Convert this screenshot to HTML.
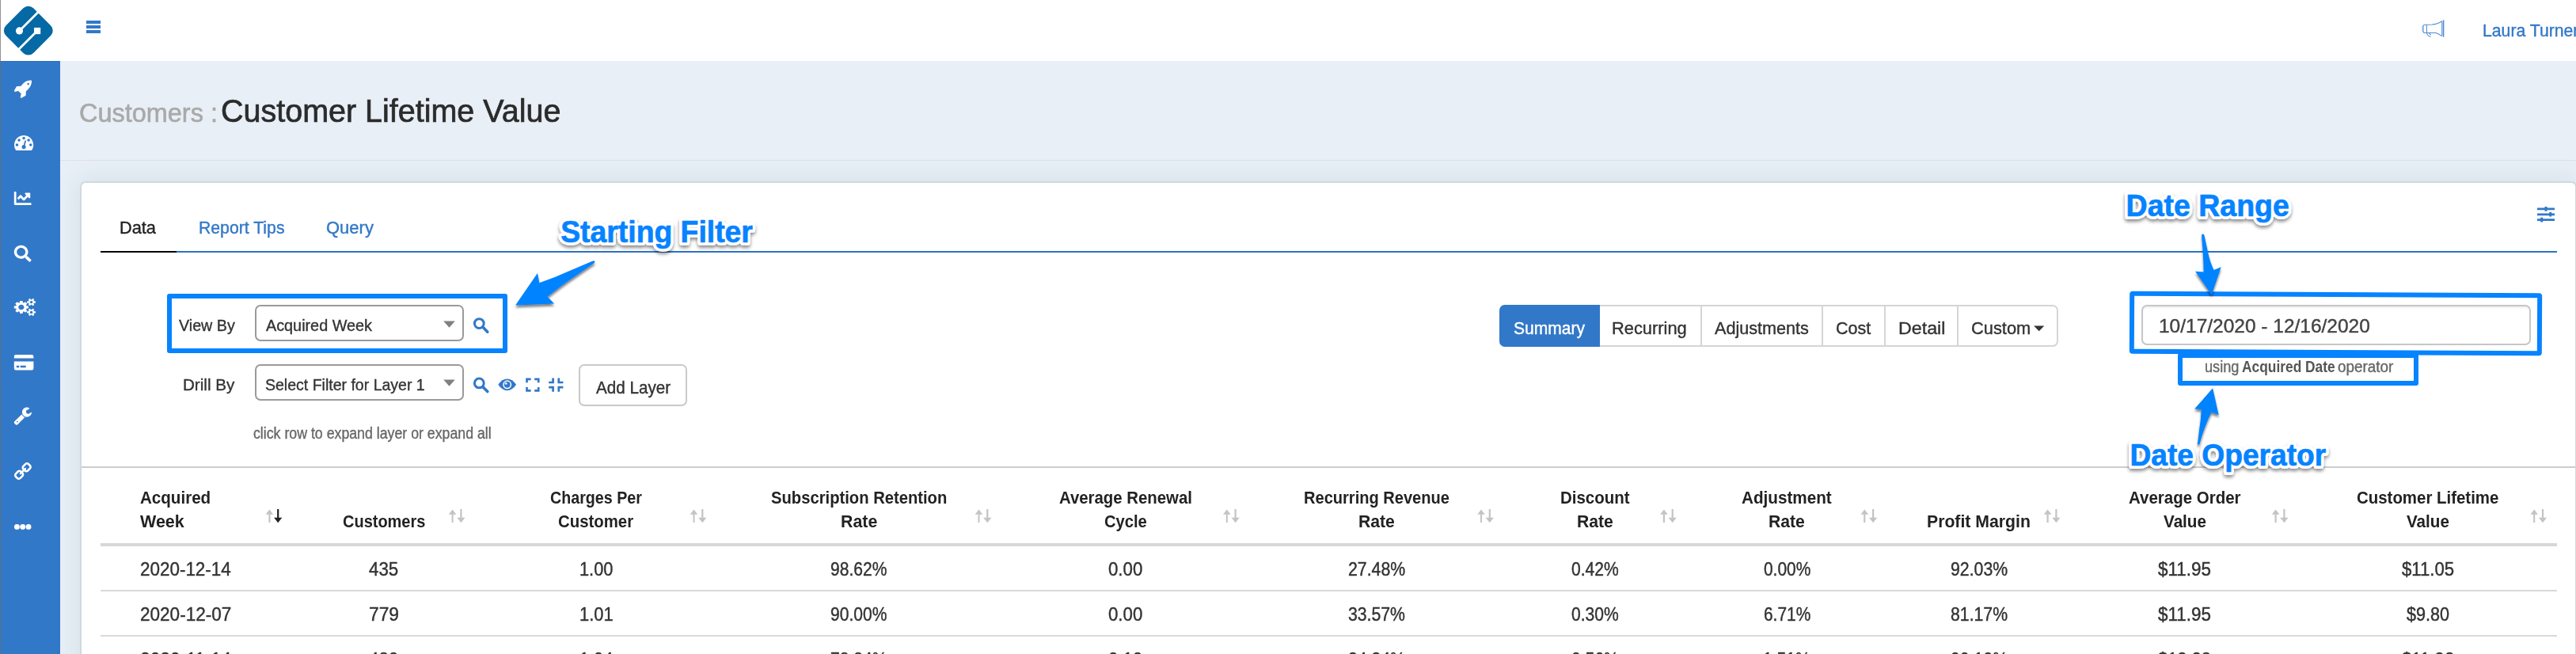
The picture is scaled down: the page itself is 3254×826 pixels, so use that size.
<!DOCTYPE html>
<html lang="en"><head><meta charset="utf-8"><title>Customer Lifetime Value</title>
<style>
html,body{margin:0;padding:0}
body{width:3254px;height:826px;overflow:hidden;position:relative;background:#e8eff6;font-family:"Liberation Sans",sans-serif}
.a{position:absolute;box-sizing:border-box}
.t{position:absolute;white-space:pre;line-height:1;transform-origin:0 0;-webkit-text-stroke:0.018em currentColor}
.ann{font-weight:700;paint-order:stroke fill}
</style></head><body>
<div class="a" style="left:0.00px;top:0.00px;width:3254.00px;height:77.00px;background:#fff"></div>
<div class="a" style="left:76.00px;top:77.00px;width:3178.00px;height:125.40px;background:#e8eff6"></div>
<div class="a" style="left:76.00px;top:202.00px;width:3178.00px;height:1.20px;background:#dde1e4"></div>
<div class="a" style="left:0.00px;top:77.00px;width:76.00px;height:749.00px;background:#3278c8"></div>
<div class="a" style="left:0.00px;top:0.00px;width:1.00px;height:826.00px;background:rgba(110,110,110,0.75)"></div>
<div class="a" style="left:1.00px;top:77.00px;width:75.00px;height:1.00px;background:#2c70c4"></div>
<svg class="a" style="left:0;top:0" width="80" height="77" viewBox="0 0 80 77">
<g transform="translate(35.8 38.65) rotate(45)"><rect x="-24.5" y="-24.5" width="49" height="49" rx="9" fill="#0469a4"/></g>
<g stroke="#fff" stroke-width="2.8" fill="none"><path d="M24.5 38.9 L50 13.4"/><path d="M47 39 L21 65"/></g>
<circle cx="24.5" cy="38.9" r="4.6" fill="#fff"/><rect x="43" y="34.9" width="8.2" height="8.2" fill="#fff"/>
</svg>
<div class="a" style="left:109.00px;top:26.40px;width:18.30px;height:3.60px;background:#3278c8"></div>
<div class="a" style="left:109.00px;top:32.40px;width:18.30px;height:3.60px;background:#3278c8"></div>
<div class="a" style="left:109.00px;top:38.40px;width:18.30px;height:3.60px;background:#3278c8"></div>
<svg class="a" style="left:3050px;top:20px" width="50" height="36" viewBox="3050 20 50 36">
<rect x="3059.1" y="32.5" width="1.7" height="7.3" fill="#c4d7f0"/><rect x="3084.6" y="26.9" width="1.6" height="18.6" fill="#c4d7f0"/>
<g fill="none" stroke="#4f8ad3" stroke-width="1.05">
<path d="M3065.4 31.2 H3063 Q3061 31.2 3061 33.2 V39.5 Q3061 41.5 3063 41.5 H3065.4"/>
<path d="M3065.4 31.2 V41.5"/>
<path d="M3065.4 31.2 L3072 31.1 Q3079 30.6 3084.6 26.7"/>
<path d="M3065.4 41.5 L3077 41.5 Q3080 42.5 3084.6 45.6"/>
<path d="M3084.4 26.7 V45.6" stroke-width="0.8"/>
<path d="M3086.6 25.3 V46.7" stroke-width="1.5"/>
<path d="M3065.6 41.8 Q3066 45.5 3070.6 46.6 M3068.4 41.8 Q3069.5 43.5 3070.8 44.2"/>
</g></svg>
<span id="t0" class="t " style="left:3135.86px;top:28.00px;font-size:22.40px;color:#3278c8;transform:scaleX(0.9470);">Laura Turner</span>
<svg class="a" style="left:0;top:0" width="3254" height="826"><path fill="#fff" transform="translate(17.80 101.60) scale(0.01360 -0.01360) translate(-31.9 -1408.0)" d="M1440 1088C1440 1035 1397 992 1344 992C1291 992 1248 1035 1248 1088C1248 1141 1291 1184 1344 1184C1397 1184 1440 1141 1440 1088ZM1664 1376C1664 1394 1648 1408 1630 1408C1282 1408 1091 1328 841 1079C784 1021 725 955 665 884L286 864C276 863 266 857 260 848L36 464C29 452 31 436 41 425L105 361C111 355 120 352 128 352C131 352 134 352 137 353L413 438L694 157L609 -119C606 -130 609 -142 617 -151L681 -215C688 -221 696 -224 704 -224C710 -224 715 -223 720 -220L1104 4C1113 10 1119 20 1120 30L1140 409C1211 469 1277 528 1335 585C1572 823 1664 1044 1664 1376Z"/></svg>
<svg class="a" style="left:0;top:0" width="3254" height="826"><path fill="#fff" transform="translate(18.01 171.00) scale(0.01349 -0.01349) translate(0.0 -1280.0)" d="M384 384C384 313 327 256 256 256C185 256 128 313 128 384C128 455 185 512 256 512C327 512 384 455 384 384ZM576 832C576 761 519 704 448 704C377 704 320 761 320 832C320 903 377 960 448 960C519 960 576 903 576 832ZM1004 351C1069 306 1103 224 1082 143C1055 41 950 -21 847 6C745 33 683 138 710 241C732 322 801 377 880 383L981 765C990 799 1025 820 1059 811C1093 802 1113 767 1105 733ZM1664 384C1664 313 1607 256 1536 256C1465 256 1408 313 1408 384C1408 455 1465 512 1536 512C1607 512 1664 455 1664 384ZM1024 1024C1024 953 967 896 896 896C825 896 768 953 768 1024C768 1095 825 1152 896 1152C967 1152 1024 1095 1024 1024ZM1472 832C1472 761 1415 704 1344 704C1273 704 1216 761 1216 832C1216 903 1273 960 1344 960C1415 960 1472 903 1472 832ZM1792 384C1792 878 1390 1280 896 1280C402 1280 0 878 0 384C0 212 49 45 141 -99C153 -117 173 -128 195 -128H1597C1619 -128 1639 -117 1651 -99C1743 46 1792 212 1792 384Z"/></svg>
<svg class="a" style="left:0;top:0" width="3254" height="826"><path fill="#fff" transform="translate(17.80 242.00) scale(0.04258 0.04427) translate(0.0 -64.0)" d="M496 384H64V80c0-8.84-7.16-16-16-16H16C7.16 64 0 71.16 0 80v336c0 17.67 14.33 32 32 32h464c8.84 0 16-7.16 16-16v-32c0-8.84-7.16-16-16-16zM464 96H345.94c-21.38 0-32.09 25.85-16.97 40.97l32.4 32.4L288 242.75l-73.37-73.37c-12.5-12.5-32.76-12.5-45.25 0l-68.69 68.69c-6.25 6.25-6.25 16.38 0 22.63l22.62 22.62c6.25 6.25 16.38 6.25 22.63 0L192 237.25l73.37 73.37c12.5 12.5 32.76 12.5 45.25 0l96-96 32.4 32.4c15.12 15.12 40.97 4.41 40.97-16.97V112c.01-8.84-7.15-16-15.99-16z"/></svg>
<svg class="a" style="left:0;top:0" width="3254" height="826"><path fill="#fff" transform="translate(17.80 309.80) scale(0.04258 0.04102) translate(0.0 0.0)" d="M505 442.7L405.3 343c-4.5-4.5-10.6-7-17-7H372c27.6-35.3 44-79.7 44-128C416 93.1 322.9 0 208 0S0 93.1 0 208s93.1 208 208 208c48.3 0 92.7-16.4 128-44v16.3c0 6.4 2.5 12.5 7 17l99.700 99.7c9.4 9.4 24.6 9.4 33.9 0l28.300-28.300c9.4-9.4 9.4-24.6.1-34zM208 336c-70.7 0-128-57.2-128-128 0-70.7 57.2-128 128-128 70.7 0 128 57.2 128 128 0 70.7-57.2 128-128 128z"/></svg>
<svg class="a" style="left:0;top:0" width="3254" height="826"><path fill="#fff" transform="translate(17.80 377.00) scale(0.01417 -0.01249) translate(0.0 -1520.0)" d="M896 640C896 499 781 384 640 384C499 384 384 499 384 640C384 781 499 896 640 896C781 896 896 781 896 640ZM1664 128C1664 58 1607 0 1536 0C1466 0 1408 57 1408 128C1408 198 1466 256 1536 256C1606 256 1664 198 1664 128ZM1664 1152C1664 1082 1607 1024 1536 1024C1466 1024 1408 1081 1408 1152C1408 1222 1466 1280 1536 1280C1606 1280 1664 1222 1664 1152ZM1280 731C1280 745 1270 758 1256 761L1104 784C1095 812 1083 839 1070 866C1098 905 1128 941 1157 980C1161 986 1164 992 1164 999C1164 1027 1046 1135 1020 1159C1014 1164 1007 1167 999 1167C992 1167 985 1165 979 1160L861 1071C837 1083 812 1094 786 1102L763 1255C761 1269 747 1280 733 1280H547C533 1280 521 1270 517 1256C504 1207 499 1152 494 1102C467 1093 442 1083 417 1070L302 1160C296 1164 289 1167 281 1167C252 1167 140 1046 120 1019C115 1013 113 1006 113 999C113 992 116 985 120 979C152 941 182 904 210 864C197 839 186 814 178 788L23 764C10 762 0 747 0 734V549C0 535 10 522 24 520L176 496C185 468 197 441 211 414C182 375 152 338 123 300C119 294 116 288 116 281C116 252 234 145 260 121C266 116 273 113 281 113C288 113 296 115 301 120L419 209C443 197 468 186 494 178L517 25C519 11 533 0 547 0H733C747 0 759 10 763 24C776 73 781 128 786 179C813 187 838 197 863 210L978 120C984 116 991 113 999 113C1028 113 1140 235 1160 262C1165 267 1167 274 1167 281C1167 289 1164 295 1160 301C1128 339 1098 376 1070 416C1083 441 1094 466 1102 492L1257 516C1270 518 1280 533 1280 546ZM1920 198C1920 213 1791 227 1771 229C1763 247 1753 265 1741 281C1750 301 1792 401 1792 419C1792 421 1791 424 1788 426C1776 433 1669 496 1664 496L1658 494C1624 460 1594 421 1566 382C1556 383 1546 384 1536 384C1526 384 1516 383 1506 382C1496 397 1421 496 1408 496C1403 496 1296 432 1284 426C1281 424 1280 421 1280 419C1280 402 1322 301 1331 281C1319 265 1309 247 1301 229C1281 227 1152 213 1152 198V58C1152 43 1281 29 1301 27C1309 8 1319 -9 1331 -25C1322 -45 1280 -146 1280 -163C1280 -165 1281 -168 1284 -170C1296 -177 1403 -241 1408 -241C1421 -241 1496 -141 1506 -126C1516 -127 1526 -128 1536 -128C1546 -128 1556 -127 1566 -126C1576 -141 1651 -241 1664 -241C1669 -241 1776 -177 1788 -170C1791 -168 1792 -166 1792 -163C1792 -145 1750 -45 1741 -25C1753 -9 1763 8 1771 27C1791 29 1920 43 1920 58ZM1920 1222C1920 1237 1791 1251 1771 1253C1763 1271 1753 1289 1741 1305C1750 1325 1792 1425 1792 1443C1792 1445 1791 1448 1788 1450C1776 1457 1669 1520 1664 1520L1658 1518C1624 1484 1594 1445 1566 1406C1556 1407 1546 1408 1536 1408C1526 1408 1516 1407 1506 1406C1496 1421 1421 1520 1408 1520C1403 1520 1296 1456 1284 1450C1281 1448 1280 1445 1280 1443C1280 1426 1322 1325 1331 1305C1319 1289 1309 1271 1301 1253C1281 1251 1152 1237 1152 1222V1082C1152 1067 1281 1053 1301 1051C1309 1032 1319 1015 1331 999C1322 979 1280 878 1280 861C1280 859 1281 856 1284 854C1296 847 1403 783 1408 783C1421 783 1496 883 1506 898C1516 897 1526 896 1536 896C1546 896 1556 897 1566 898C1576 883 1651 783 1664 783C1669 783 1776 847 1788 854C1791 856 1792 858 1792 861C1792 879 1750 979 1741 999C1753 1015 1763 1032 1771 1051C1791 1053 1920 1067 1920 1082Z"/></svg>
<svg class="a" style="left:0;top:0" width="100" height="826"><path fill="#fff" fill-rule="evenodd" d="M20 448.1 H40.2 Q42.4 448.1 42.4 450.3 V452.5 H17.8 V450.3 Q17.8 448.1 20 448.1Z M17.8 456.4 H42.4 V465.2 Q42.4 467.4 40.2 467.4 H20 Q17.8 467.4 17.8 465.2Z M20.8 461.7 H24.2 V464.2 H20.8Z M25.7 461.7 H32.7 V464.2 H25.7Z"/><circle cx="21.4" cy="665.4" r="3.45" fill="#fff"/><circle cx="28.7" cy="665.4" r="3.45" fill="#fff"/><circle cx="36" cy="665.4" r="3.45" fill="#fff"/></svg>
<svg class="a" style="left:0;top:0" width="3254" height="826"><path fill="#fff" transform="translate(17.80 514.54) scale(0.01353 -0.01353) translate(-21.0 -1408.0)" d="M384 64C384 29 355 0 320 0C285 0 256 29 256 64C256 99 285 128 320 128C355 128 384 99 384 64ZM1028 484C897 536 792 641 740 772L59 91C35 67 21 34 21 0C21 -34 35 -67 59 -90L165 -198C189 -221 222 -235 256 -235C290 -235 323 -221 346 -198L1028 484ZM1662 919C1662 939 1650 954 1630 954C1610 954 1378 808 1345 789L1152 896V1120L1445 1289C1454 1295 1461 1306 1461 1317C1461 1329 1455 1338 1445 1345C1384 1386 1289 1408 1216 1408C969 1408 768 1207 768 960C768 713 969 512 1216 512C1405 512 1576 635 1639 813C1650 845 1662 886 1662 919Z"/></svg>
<svg class="a" style="left:0;top:0" width="3254" height="826"><path fill="#fff" transform="translate(39.90 584.00) scale(-0.01348 -0.01348) translate(-16.0 -1520.0)" d="M1456 320C1456 295 1446 271 1428 253L1281 107C1263 90 1238 81 1213 81C1188 81 1163 90 1145 108L939 315C921 333 911 358 911 383C911 413 923 436 944 456C977 423 1005 384 1056 384C1109 384 1152 427 1152 480C1152 531 1113 559 1080 592C1100 613 1123 624 1152 624C1177 624 1202 614 1220 596L1428 388C1446 370 1456 346 1456 320ZM753 1025C753 995 741 972 720 952C687 985 659 1024 608 1024C555 1024 512 981 512 928C512 877 551 849 584 816C564 795 541 785 512 785C487 785 462 794 444 812L236 1020C218 1038 208 1062 208 1088C208 1113 218 1137 236 1155L383 1301C401 1318 426 1328 451 1328C476 1328 501 1318 519 1300L725 1093C743 1075 753 1050 753 1025ZM1648 320C1648 397 1619 469 1564 524L1356 732C1302 786 1228 816 1152 816C1073 816 999 784 944 728L856 816C912 871 944 946 944 1025C944 1101 915 1174 861 1228L655 1435C601 1490 528 1520 451 1520C375 1520 302 1491 248 1437L101 1291C47 1238 16 1164 16 1088C16 1011 45 939 100 884L308 676C362 622 436 592 512 592C591 592 665 624 720 680L808 592C752 537 720 462 720 383C720 307 749 234 803 180L1009 -27C1063 -82 1136 -112 1213 -112C1289 -112 1362 -83 1416 -29L1563 117C1617 170 1648 244 1648 320Z"/></svg>
<span id="t1" class="t " style="left:99.75px;top:125.00px;font-size:34.00px;color:#a9a9a9;transform:scaleX(0.9544);">Customers :</span>
<span id="t2" class="t " style="left:278.69px;top:121.00px;font-size:40.30px;color:#2b2b2b;transform:scaleX(0.9797);">Customer Lifetime Value</span>
<div class="a" style="left:101.00px;top:228.60px;width:3153.60px;height:700.00px;background:#fff;border:2px solid #cfdadd;border-radius:7px;box-shadow:0 0 30px rgba(90,135,135,0.15)"></div>
<span id="t3" class="t " style="left:151.41px;top:278.00px;font-size:21.30px;color:#222;transform:scaleX(1.0219);">Data</span>
<span id="t4" class="t " style="left:250.76px;top:278.00px;font-size:21.30px;color:#3278c8;transform:scaleX(0.9963);">Report Tips</span>
<span id="t5" class="t " style="left:412.16px;top:278.00px;font-size:21.30px;color:#3278c8;transform:scaleX(1.0325);">Query</span>
<div class="a" style="left:222.50px;top:317.00px;width:3007.50px;height:2.00px;background:#2d72c5"></div>
<div class="a" style="left:127.00px;top:317.00px;width:95.50px;height:2.00px;background:#000"></div>
<svg class="a" style="left:0;top:0" width="3254" height="826"><g stroke="#3278c8" fill="none"><path stroke-width="2.7" d="M3205 263.9 H3227 M3205 270.8 H3227 M3205 277.6 H3227"/><path stroke-width="3" d="M3216 261.1 V266.7 M3221.7 268 V273.6 M3210.7 274.8 V280.4"/></g></svg>
<div class="a" style="left:322.00px;top:385.00px;width:263.80px;height:45.60px;background:#fff;border:2px solid #9a9a9a;border-radius:7px"></div>
<div class="a" style="left:322.00px;top:460.20px;width:263.80px;height:45.50px;background:#fff;border:2px solid #9a9a9a;border-radius:7px"></div>
<span id="t6" class="t " style="left:225.61px;top:401.00px;font-size:20.80px;color:#333;transform:scaleX(0.9462);">View By</span>
<span id="t7" class="t " style="left:231.11px;top:476.00px;font-size:20.80px;color:#333;transform:scaleX(0.9904);">Drill By</span>
<span id="t8" class="t " style="left:336.16px;top:401.00px;font-size:20.80px;color:#333;transform:scaleX(0.9520);">Acquired Week</span>
<span id="t9" class="t " style="left:335.31px;top:476.00px;font-size:20.80px;color:#333;transform:scaleX(0.9383);">Select Filter for Layer 1</span>
<svg class="a" style="left:0;top:0" width="3254" height="826"><path fill="#808080" d="M560.2 405.4 H574.8 L567.5 413.8Z M560.2 479.4 H574.8 L567.5 487.8Z"/><g fill="none" stroke="#3278c8" stroke-width="3"><circle cx="605.3" cy="408.6" r="5.9"/><circle cx="605.3" cy="483.9" r="5.9"/></g><g stroke="#3278c8" stroke-width="3.6" stroke-linecap="round"><path d="M610.3 413.6 L615.8 419.2 M610.3 488.9 L615.8 494.5"/></g><g fill="none" stroke="#3278c8" stroke-width="2.7"><path d="M665.5 483.2 V478.8 H670.6 M675.2 478.8 H680.2 V483.2 M680.2 489 V493.4 H675.2 M670.6 493.4 H665.5 V489"/><path d="M693.2 483 H698.6 V477.4 M705.8 477.4 V483 H711.4 M711.4 489.2 H705.8 V494.8 M698.6 494.8 V489.2 H693.2"/></g></svg>
<svg class="a" style="left:0;top:0" width="3254" height="826"><path fill="#3278c8" d="M629.3 485.8 Q634.2 478.4 640.7 478.4 Q647.2 478.4 652.1 485.8 Q647.2 493.2 640.7 493.2 Q634.2 493.2 629.3 485.8Z"/><circle cx="640.7" cy="485.8" r="4.7" fill="none" stroke="#fff" stroke-width="1.5"/><circle cx="639.2" cy="484.3" r="1.5" fill="#dce9f8"/></svg>
<div class="a" style="left:731.20px;top:460.30px;width:137.00px;height:53.00px;background:#fff;border:2px solid #c9c9c9;border-radius:7px"></div>
<span id="t10" class="t " style="left:752.96px;top:479.00px;font-size:22.30px;color:#333;transform:scaleX(0.9255);">Add Layer</span>
<span id="t11" class="t " style="left:320.25px;top:538.00px;font-size:19.30px;color:#666;transform:scaleX(0.9200);">click row to expand layer or expand all</span>
<div class="a" style="left:211.00px;top:370.80px;width:430.30px;height:75.60px;border:6px solid #0683ff;border-radius:3px"></div>
<div class="a" style="left:1894.00px;top:385.00px;width:706.30px;height:53.00px;background:#fff;border:2px solid #d5d5d5;border-radius:7px"></div>
<div class="a" style="left:1894.00px;top:385.00px;width:127.00px;height:53.00px;background:#3278c8;border-radius:7px 0 0 7px"></div>
<div class="a" style="left:2148.00px;top:385.00px;width:2.00px;height:53.00px;background:#d5d5d5"></div>
<div class="a" style="left:2301.40px;top:385.00px;width:2.00px;height:53.00px;background:#d5d5d5"></div>
<div class="a" style="left:2380.10px;top:385.00px;width:2.00px;height:53.00px;background:#d5d5d5"></div>
<div class="a" style="left:2472.20px;top:385.00px;width:2.00px;height:53.00px;background:#d5d5d5"></div>
<span id="t12" class="t " style="left:1912.34px;top:404.00px;font-size:22.30px;color:#fff;transform:scaleX(0.9433);">Summary</span>
<span id="t13" class="t " style="left:2036.21px;top:404.00px;font-size:22.30px;color:#333;transform:scaleX(0.9798);">Recurring</span>
<span id="t14" class="t " style="left:2165.76px;top:404.00px;font-size:22.30px;color:#333;transform:scaleX(0.9693);">Adjustments</span>
<span id="t15" class="t " style="left:2319.11px;top:404.00px;font-size:22.30px;color:#333;transform:scaleX(0.9649);">Cost</span>
<span id="t16" class="t " style="left:2397.69px;top:404.00px;font-size:22.30px;color:#333;transform:scaleX(1.0429);">Detail</span>
<span id="t17" class="t " style="left:2490.19px;top:404.00px;font-size:22.30px;color:#333;transform:scaleX(0.9794);">Custom</span>
<svg class="a" style="left:0;top:0" width="3254" height="826"><path fill="#333" d="M2569.1 411.5 H2582.3 L2575.7 418.2Z"/></svg>
<div class="a" style="left:2705.30px;top:385.30px;width:491.70px;height:50.80px;background:#fff;border:2px solid #c6c6c6;border-radius:7px;box-shadow:inset 0 2px 2px rgba(0,0,0,0.06)"></div>
<span id="t18" class="t " style="left:2726.53px;top:401.00px;font-size:23.40px;color:#444;transform:scaleX(1.0467);">10/17/2020 - 12/16/2020</span>
<span id="t19" class="t " style="left:2785.32px;top:454.00px;font-size:19.30px;color:#666;transform:scaleX(0.9424);">using</span>
<span id="t20" class="t " style="left:2831.57px;top:454.00px;font-size:19.30px;color:#555;font-weight:700;-webkit-text-stroke:0;transform:scaleX(0.9006);">Acquired Date</span>
<span id="t21" class="t " style="left:2952.81px;top:454.00px;font-size:19.30px;color:#666;transform:scaleX(0.9788);">operator</span>
<div class="a" style="left:2751.30px;top:446.10px;width:303.30px;height:40.70px;border:6px solid #0683ff;border-radius:3px"></div>
<div class="a" style="left:2689.80px;top:368.90px;width:521.20px;height:78.80px;background:transparent;border:6px solid #0683ff;border-radius:4px;transform:rotate(0.3deg)"></div>
<div class="a" style="left:103.00px;top:589.00px;width:3150.00px;height:2.00px;background:#cdcdcd"></div>
<div class="a" style="left:127.00px;top:686.00px;width:3103.00px;height:4.00px;background:#d7d7d7"></div>
<div class="a" style="left:127.00px;top:745.00px;width:3103.00px;height:2.00px;background:#d9d9d9"></div>
<div class="a" style="left:127.00px;top:802.00px;width:3103.00px;height:2.00px;background:#d9d9d9"></div>
<span id="t22" class="t " style="left:176.59px;top:617.00px;font-size:22.90px;color:#222;font-weight:700;-webkit-text-stroke:0;transform:scaleX(0.8987);">Acquired</span>
<span id="t23" class="t " style="left:177.08px;top:647.00px;font-size:22.90px;color:#222;font-weight:700;-webkit-text-stroke:0;transform:scaleX(0.9379);">Week</span>
<span id="t24" class="t " style="left:432.78px;top:647.00px;font-size:22.90px;color:#222;font-weight:700;-webkit-text-stroke:0;transform:scaleX(0.8726);">Customers</span>
<span id="t25" class="t " style="left:694.59px;top:617.00px;font-size:22.90px;color:#222;font-weight:700;-webkit-text-stroke:0;transform:scaleX(0.8594);">Charges Per</span>
<span id="t26" class="t " style="left:704.76px;top:647.00px;font-size:22.90px;color:#222;font-weight:700;-webkit-text-stroke:0;transform:scaleX(0.8905);">Customer</span>
<span id="t27" class="t " style="left:974.02px;top:617.00px;font-size:22.90px;color:#222;font-weight:700;-webkit-text-stroke:0;transform:scaleX(0.8829);">Subscription Retention</span>
<span id="t28" class="t " style="left:1061.87px;top:647.00px;font-size:22.90px;color:#222;font-weight:700;-webkit-text-stroke:0;transform:scaleX(0.9321);">Rate</span>
<span id="t29" class="t " style="left:1337.89px;top:617.00px;font-size:22.90px;color:#222;font-weight:700;-webkit-text-stroke:0;transform:scaleX(0.8899);">Average Renewal</span>
<span id="t30" class="t " style="left:1394.57px;top:647.00px;font-size:22.90px;color:#222;font-weight:700;-webkit-text-stroke:0;transform:scaleX(0.8809);">Cycle</span>
<span id="t31" class="t " style="left:1646.66px;top:617.00px;font-size:22.90px;color:#222;font-weight:700;-webkit-text-stroke:0;transform:scaleX(0.8762);">Recurring Revenue</span>
<span id="t32" class="t " style="left:1715.89px;top:647.00px;font-size:22.90px;color:#222;font-weight:700;-webkit-text-stroke:0;transform:scaleX(0.9237);">Rate</span>
<span id="t33" class="t " style="left:1971.13px;top:617.00px;font-size:22.90px;color:#222;font-weight:700;-webkit-text-stroke:0;transform:scaleX(0.8936);">Discount</span>
<span id="t34" class="t " style="left:1991.99px;top:647.00px;font-size:22.90px;color:#222;font-weight:700;-webkit-text-stroke:0;transform:scaleX(0.9237);">Rate</span>
<span id="t35" class="t " style="left:2200.38px;top:617.00px;font-size:22.90px;color:#222;font-weight:700;-webkit-text-stroke:0;transform:scaleX(0.9036);">Adjustment</span>
<span id="t36" class="t " style="left:2234.49px;top:647.00px;font-size:22.90px;color:#222;font-weight:700;-webkit-text-stroke:0;transform:scaleX(0.9237);">Rate</span>
<span id="t37" class="t " style="left:2434.48px;top:647.00px;font-size:22.90px;color:#222;font-weight:700;-webkit-text-stroke:0;transform:scaleX(0.9269);">Profit Margin</span>
<span id="t38" class="t " style="left:2688.79px;top:617.00px;font-size:22.90px;color:#222;font-weight:700;-webkit-text-stroke:0;transform:scaleX(0.8945);">Average Order</span>
<span id="t39" class="t " style="left:2732.76px;top:647.00px;font-size:22.90px;color:#222;font-weight:700;-webkit-text-stroke:0;transform:scaleX(0.9019);">Value</span>
<span id="t40" class="t " style="left:2977.16px;top:617.00px;font-size:22.90px;color:#222;font-weight:700;-webkit-text-stroke:0;transform:scaleX(0.8924);">Customer Lifetime</span>
<span id="t41" class="t " style="left:3040.26px;top:647.00px;font-size:22.90px;color:#222;font-weight:700;-webkit-text-stroke:0;transform:scaleX(0.9002);">Value</span>
<svg class="a" style="left:0;top:0" width="3254" height="826"><path fill="#c4c4c4" d="M340.4 643.5 L345.2 649.8 H341.5 V659.9 H339.4 V649.8 H335.6Z"/><path fill="#222" d="M351.2 660.3 L356.3 653.7 H352.3 V643.0 H350.1 V653.7 H346.1Z"/><path fill="#c4c4c4" d="M571.6 643.5 L576.4 649.8 H572.6 V659.9 H570.6 V649.8 H566.8Z"/><path fill="#c4c4c4" d="M582.4 660.3 L587.5 653.7 H583.5 V643.0 H581.3 V653.7 H577.3Z"/><path fill="#c4c4c4" d="M876.5 643.5 L881.3 649.8 H877.5 V659.9 H875.5 V649.8 H871.7Z"/><path fill="#c4c4c4" d="M887.3 660.3 L892.4 653.7 H888.4 V643.0 H886.2 V653.7 H882.2Z"/><path fill="#c4c4c4" d="M1236.5 643.5 L1241.3 649.8 H1237.5 V659.9 H1235.5 V649.8 H1231.7Z"/><path fill="#c4c4c4" d="M1247.3 660.3 L1252.4 653.7 H1248.4 V643.0 H1246.2 V653.7 H1242.2Z"/><path fill="#c4c4c4" d="M1549.8 643.5 L1554.6 649.8 H1550.8 V659.9 H1548.8 V649.8 H1545.0Z"/><path fill="#c4c4c4" d="M1560.6 660.3 L1565.7 653.7 H1561.7 V643.0 H1559.5 V653.7 H1555.5Z"/><path fill="#c4c4c4" d="M1871.0 643.5 L1875.8 649.8 H1872.0 V659.9 H1870.0 V649.8 H1866.2Z"/><path fill="#c4c4c4" d="M1881.8 660.3 L1886.9 653.7 H1882.9 V643.0 H1880.7 V653.7 H1876.7Z"/><path fill="#c4c4c4" d="M2101.9 643.5 L2106.7 649.8 H2103.0 V659.9 H2100.8 V649.8 H2097.1Z"/><path fill="#c4c4c4" d="M2112.7 660.3 L2117.8 653.7 H2113.8 V643.0 H2111.6 V653.7 H2107.6Z"/><path fill="#c4c4c4" d="M2355.3 643.5 L2360.1 649.8 H2356.3 V659.9 H2354.2 V649.8 H2350.5Z"/><path fill="#c4c4c4" d="M2366.1 660.3 L2371.2 653.7 H2367.2 V643.0 H2365.0 V653.7 H2361.0Z"/><path fill="#c4c4c4" d="M2586.6 643.5 L2591.4 649.8 H2587.7 V659.9 H2585.5 V649.8 H2581.8Z"/><path fill="#c4c4c4" d="M2597.4 660.3 L2602.5 653.7 H2598.5 V643.0 H2596.3 V653.7 H2592.3Z"/><path fill="#c4c4c4" d="M2874.6 643.5 L2879.4 649.8 H2875.7 V659.9 H2873.5 V649.8 H2869.8Z"/><path fill="#c4c4c4" d="M2885.4 660.3 L2890.5 653.7 H2886.5 V643.0 H2884.3 V653.7 H2880.3Z"/><path fill="#c4c4c4" d="M3201.2 643.5 L3206.0 649.8 H3202.2 V659.9 H3200.1 V649.8 H3196.4Z"/><path fill="#c4c4c4" d="M3212.0 660.3 L3217.1 653.7 H3213.1 V643.0 H3210.9 V653.7 H3206.9Z"/></svg>
<span id="t42" class="t " style="left:176.77px;top:708.00px;font-size:23.00px;color:#333;transform:scaleX(0.9756);">2020-12-14</span>
<span id="t43" class="t " style="left:466.19px;top:708.00px;font-size:23.00px;color:#333;transform:scaleX(0.9707);">435</span>
<span id="t44" class="t " style="left:731.79px;top:708.00px;font-size:23.00px;color:#333;transform:scaleX(0.9474);">1.00</span>
<span id="t45" class="t " style="left:1049.41px;top:708.00px;font-size:23.00px;color:#333;transform:scaleX(0.9144);">98.62%</span>
<span id="t46" class="t " style="left:1399.98px;top:708.00px;font-size:23.00px;color:#333;transform:scaleX(0.9658);">0.00</span>
<span id="t47" class="t " style="left:1702.83px;top:708.00px;font-size:23.00px;color:#333;transform:scaleX(0.9258);">27.48%</span>
<span id="t48" class="t " style="left:1985.33px;top:708.00px;font-size:23.00px;color:#333;transform:scaleX(0.9150);">0.42%</span>
<span id="t49" class="t " style="left:2227.63px;top:708.00px;font-size:23.00px;color:#333;transform:scaleX(0.9087);">0.00%</span>
<span id="t50" class="t " style="left:2463.80px;top:708.00px;font-size:23.00px;color:#333;transform:scaleX(0.9249);">92.03%</span>
<span id="t51" class="t " style="left:2726.21px;top:708.00px;font-size:23.00px;color:#333;transform:scaleX(0.9744);">$11.95</span>
<span id="t52" class="t " style="left:3034.06px;top:708.00px;font-size:23.00px;color:#333;transform:scaleX(0.9640);">$11.05</span>
<span id="t53" class="t " style="left:176.77px;top:765.00px;font-size:23.00px;color:#333;transform:scaleX(0.9797);">2020-12-07</span>
<span id="t54" class="t " style="left:465.53px;top:765.00px;font-size:23.00px;color:#333;transform:scaleX(0.9915);">779</span>
<span id="t55" class="t " style="left:731.78px;top:765.00px;font-size:23.00px;color:#333;transform:scaleX(0.9525);">1.01</span>
<span id="t56" class="t " style="left:1049.41px;top:765.00px;font-size:23.00px;color:#333;transform:scaleX(0.9144);">90.00%</span>
<span id="t57" class="t " style="left:1399.98px;top:765.00px;font-size:23.00px;color:#333;transform:scaleX(0.9658);">0.00</span>
<span id="t58" class="t " style="left:1703.09px;top:765.00px;font-size:23.00px;color:#333;transform:scaleX(0.9224);">33.57%</span>
<span id="t59" class="t " style="left:1985.33px;top:765.00px;font-size:23.00px;color:#333;transform:scaleX(0.9150);">0.30%</span>
<span id="t60" class="t " style="left:2227.54px;top:765.00px;font-size:23.00px;color:#333;transform:scaleX(0.9078);">6.71%</span>
<span id="t61" class="t " style="left:2463.88px;top:765.00px;font-size:23.00px;color:#333;transform:scaleX(0.9239);">81.17%</span>
<span id="t62" class="t " style="left:2726.21px;top:765.00px;font-size:23.00px;color:#333;transform:scaleX(0.9744);">$11.95</span>
<span id="t63" class="t " style="left:3040.07px;top:765.00px;font-size:23.00px;color:#333;transform:scaleX(0.9394);">$9.80</span>
<span id="t64" class="t " style="left:176.75px;top:822.00px;font-size:23.00px;color:#333;transform:scaleX(0.9902);">2020-11-14</span>
<span id="t65" class="t " style="left:466.19px;top:822.00px;font-size:23.00px;color:#333;transform:scaleX(0.9739);">489</span>
<span id="t66" class="t " style="left:731.80px;top:822.00px;font-size:23.00px;color:#333;transform:scaleX(0.9424);">1.04</span>
<span id="t67" class="t " style="left:1049.32px;top:822.00px;font-size:23.00px;color:#333;transform:scaleX(0.9156);">78.84%</span>
<span id="t68" class="t " style="left:1399.98px;top:822.00px;font-size:23.00px;color:#333;transform:scaleX(0.9701);">0.19</span>
<span id="t69" class="t " style="left:1703.09px;top:822.00px;font-size:23.00px;color:#333;transform:scaleX(0.9224);">34.34%</span>
<span id="t70" class="t " style="left:1985.33px;top:822.00px;font-size:23.00px;color:#333;transform:scaleX(0.9150);">0.56%</span>
<span id="t71" class="t " style="left:2226.99px;top:822.00px;font-size:23.00px;color:#333;transform:scaleX(0.9162);">1.51%</span>
<span id="t72" class="t " style="left:2463.80px;top:822.00px;font-size:23.00px;color:#333;transform:scaleX(0.9249);">90.19%</span>
<span id="t73" class="t " style="left:2726.22px;top:822.00px;font-size:23.00px;color:#333;transform:scaleX(0.9506);">$12.28</span>
<span id="t74" class="t " style="left:3034.06px;top:822.00px;font-size:23.00px;color:#333;transform:scaleX(0.9667);">$11.92</span>
<svg class="a" style="left:0;top:0;overflow:visible" width="3254" height="826"><defs><filter id="ash" x="-20%" y="-20%" width="140%" height="150%"><feGaussianBlur in="SourceAlpha" stdDeviation="1.8"/><feOffset dx="0" dy="2.6"/><feComponentTransfer><feFuncA type="linear" slope="0.5"/></feComponentTransfer><feMerge><feMergeNode/><feMergeNode in="SourceGraphic"/></feMerge></filter></defs><g fill="#0683ff" filter="url(#ash)"><path d="M747.8 330.1 L720.2 341.8 Q700 351 681.3 357.3 L679 345 L651.1 385.6 L700.2 383.4 L691.6 374.8 Q706 362.6 731.7 345.2 L751 332 Q752.2 330.6 750.6 329.6 Q749 329.2 747.8 330.1 Z"/><path d="M2782.4 295.4 Q2781 295.6 2781.1 297 L2782.7 318.3 Q2783.5 332 2783.7 343.5 L2773.1 342.8 L2793.7 372.6 L2805.7 337.3 L2796.5 341 Q2791.5 330 2789.6 321 L2784.4 297 Q2784 295.4 2782.4 295.4 Z"/><path d="M2795.1 490.2 L2772.1 516.6 L2780.6 517 Q2780.2 530 2778.6 539 L2776 560.5 Q2776.2 562 2777.6 561.6 Q2778.4 561.3 2778.6 560.4 Q2781.5 549 2785.5 539 Q2789 529 2793.7 520.5 L2802.7 524.2 Z"/></g></svg>
<svg class="a" style="left:0;top:0;overflow:visible" width="3254" height="826"><defs><filter id="sht75" x="-10%" y="-30%" width="120%" height="180%"><feGaussianBlur in="SourceAlpha" stdDeviation="2.2"/><feOffset dx="0" dy="3"/><feComponentTransfer><feFuncA type="linear" slope="0.45"/></feComponentTransfer><feMerge><feMergeNode/><feMergeNode in="SourceGraphic"/></feMerge></filter></defs><g transform="translate(708.22 305.80) scale(0.9723 1)" font-family="Liberation Sans, sans-serif" font-weight="700" font-size="38.4"><text x="0" y="0" fill="#fff" stroke="#fff" stroke-width="8" stroke-linejoin="round" filter="url(#sht75)">Starting Filter</text><text x="0" y="0" fill="#0683ff" stroke="#0683ff" stroke-width="0.7" stroke-linejoin="round">Starting Filter</text></g></svg>
<svg class="a" style="left:0;top:0;overflow:visible" width="3254" height="826"><defs><filter id="sht76" x="-10%" y="-30%" width="120%" height="180%"><feGaussianBlur in="SourceAlpha" stdDeviation="2.2"/><feOffset dx="0" dy="3"/><feComponentTransfer><feFuncA type="linear" slope="0.45"/></feComponentTransfer><feMerge><feMergeNode/><feMergeNode in="SourceGraphic"/></feMerge></filter></defs><g transform="translate(2685.59 272.60) scale(0.9762 1)" font-family="Liberation Sans, sans-serif" font-weight="700" font-size="38.4"><text x="0" y="0" fill="#fff" stroke="#fff" stroke-width="8" stroke-linejoin="round" filter="url(#sht76)">Date Range</text><text x="0" y="0" fill="#0683ff" stroke="#0683ff" stroke-width="0.7" stroke-linejoin="round">Date Range</text></g></svg>
<svg class="a" style="left:0;top:0;overflow:visible" width="3254" height="826"><defs><filter id="sht77" x="-10%" y="-30%" width="120%" height="180%"><feGaussianBlur in="SourceAlpha" stdDeviation="2.2"/><feOffset dx="0" dy="3"/><feComponentTransfer><feFuncA type="linear" slope="0.45"/></feComponentTransfer><feMerge><feMergeNode/><feMergeNode in="SourceGraphic"/></feMerge></filter></defs><g transform="translate(2690.51 588.20) scale(0.9677 1)" font-family="Liberation Sans, sans-serif" font-weight="700" font-size="38.4"><text x="0" y="0" fill="#fff" stroke="#fff" stroke-width="8" stroke-linejoin="round" filter="url(#sht77)">Date Operator</text><text x="0" y="0" fill="#0683ff" stroke="#0683ff" stroke-width="0.7" stroke-linejoin="round">Date Operator</text></g></svg>
</body></html>
